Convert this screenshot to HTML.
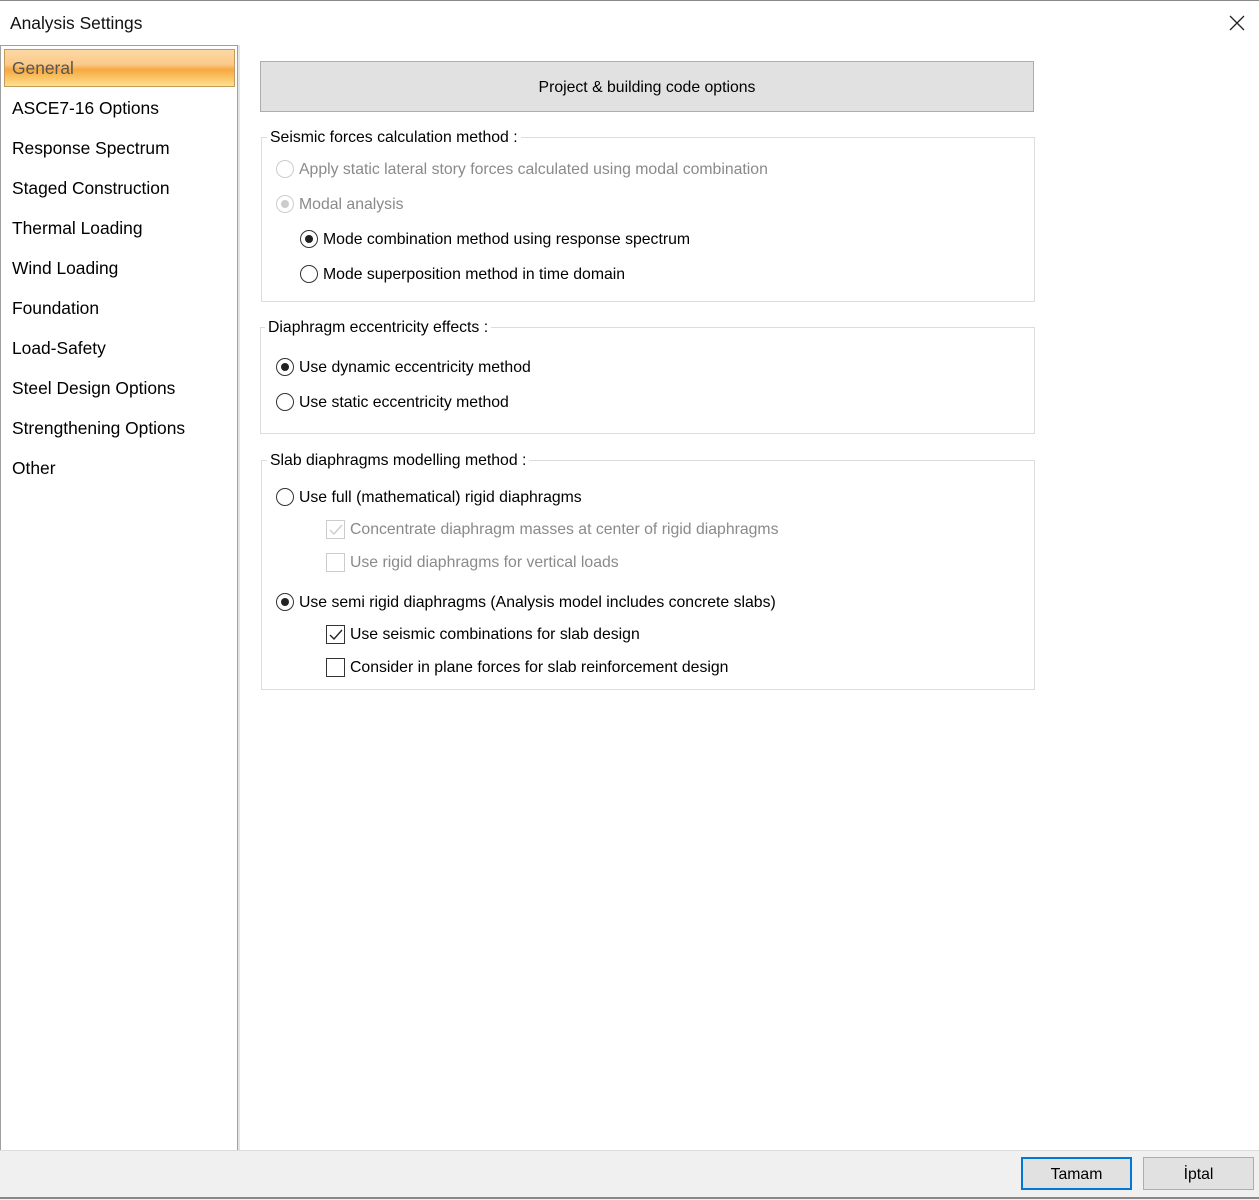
<!DOCTYPE html><html><head><style>
body{margin:0;width:1259px;height:1199px;background:#fff;position:relative;overflow:hidden;font-family:"Liberation Sans",sans-serif;font-size:15.8px;color:#000}
.a{position:absolute;white-space:nowrap}
.t{margin-top:1px}
.nav{font-size:17.4px;left:12px}
.box{position:absolute;border:1px solid #dcdcdc}
.lg{position:absolute;background:#fff;padding:0 3px;font-size:15.8px;white-space:nowrap;margin-top:1px}
.r{position:absolute;width:18px;height:18px;border:1px solid #333;border-radius:50%;box-sizing:border-box;background:#fff}
.r.on::after{content:"";position:absolute;left:4px;top:4px;width:8px;height:8px;border-radius:50%;background:#222}
.r.dis{border-color:#ccc}.r.dis.on::after{background:#ccc}
.c{position:absolute;width:19px;height:19px;border:1px solid #333;box-sizing:border-box;background:#fff}
.c.dis{border-color:#ccc}
.g{color:#8a8a8a}
</style></head><body>
<div class="a" style="left:0;top:0;width:1259px;height:1px;background:#888"></div>
<div class="a" style="left:10px;top:13px;font-size:17.4px;color:#111">Analysis Settings</div>
<svg class="a" style="left:1229px;top:15px" width="16" height="16"><path d="M1 1L15 15M15 1L1 15" stroke="#222" stroke-width="1.3"/></svg>
<div class="a" style="left:0;top:45px;width:236px;height:1104px;border:1px solid #a0a0a0"></div>
<div class="a" style="left:238px;top:45px;width:2px;height:1105px;background:#e4e4e4"></div>
<div class="a" style="left:4px;top:49px;width:229px;height:36px;border:1px solid #c49a5e;background:linear-gradient(#fcd9a4 0%,#fbc98a 40%,#f6a93f 55%,#fde08e 100%)"></div>
<div class="a nav" style="top:58px;color:#555">General</div>
<div class="a nav" style="top:98px">ASCE7-16 Options</div>
<div class="a nav" style="top:138px">Response Spectrum</div>
<div class="a nav" style="top:178px">Staged Construction</div>
<div class="a nav" style="top:218px">Thermal Loading</div>
<div class="a nav" style="top:258px">Wind Loading</div>
<div class="a nav" style="top:298px">Foundation</div>
<div class="a nav" style="top:338px">Load-Safety</div>
<div class="a nav" style="top:378px">Steel Design Options</div>
<div class="a nav" style="top:418px">Strengthening Options</div>
<div class="a nav" style="top:458px">Other</div>

<div class="a" style="left:260px;top:61px;width:772px;height:49px;background:#e1e1e1;border:1px solid #adadad;text-align:center;line-height:51px">Project &amp; building code options</div>

<div class="box" style="left:261px;top:137px;width:772px;height:163px"></div>
<div class="lg" style="left:267px;top:128px">Seismic forces calculation method :</div>
<div class="r dis" style="left:276px;top:160px"></div><div class="a g t" style="left:299px;top:160px">Apply static lateral story forces calculated using modal combination</div>
<div class="r dis on" style="left:276px;top:195px"></div><div class="a g t" style="left:299px;top:195px">Modal analysis</div>
<div class="r on" style="left:300px;top:230px"></div><div class="a t" style="left:323px;top:230px">Mode combination method using response spectrum</div>
<div class="r" style="left:300px;top:265px"></div><div class="a t" style="left:323px;top:265px">Mode superposition method in time domain</div>

<div class="box" style="left:260px;top:327px;width:773px;height:105px"></div>
<div class="lg" style="left:265px;top:318px">Diaphragm eccentricity effects :</div>
<div class="r on" style="left:276px;top:358px"></div><div class="a t" style="left:299px;top:358px">Use dynamic eccentricity method</div>
<div class="r" style="left:276px;top:393px"></div><div class="a t" style="left:299px;top:393px">Use static eccentricity method</div>

<div class="box" style="left:261px;top:460px;width:772px;height:228px"></div>
<div class="lg" style="left:267px;top:451px">Slab diaphragms modelling method :</div>
<div class="r" style="left:276px;top:488px"></div><div class="a t" style="left:299px;top:488px">Use full (mathematical) rigid diaphragms</div>
<div class="c dis" style="left:326px;top:520px"><svg width="17" height="17" style="position:absolute;left:0;top:0"><path d="M3 9L7 13L15 4" stroke="#ccc" stroke-width="1.4" fill="none"/></svg></div><div class="a g t" style="left:350px;top:520px">Concentrate diaphragm masses at center of rigid diaphragms</div>
<div class="c dis" style="left:326px;top:553px"></div><div class="a g t" style="left:350px;top:553px">Use rigid diaphragms for vertical loads</div>
<div class="r on" style="left:276px;top:593px"></div><div class="a t" style="left:299px;top:593px">Use semi rigid diaphragms (Analysis model includes concrete slabs)</div>
<div class="c" style="left:326px;top:625px"><svg width="17" height="17" style="position:absolute;left:0;top:0"><path d="M3 9L7 13L15 4" stroke="#222" stroke-width="1.4" fill="none"/></svg></div><div class="a t" style="left:350px;top:625px">Use seismic combinations for slab design</div>
<div class="c" style="left:326px;top:658px"></div><div class="a t" style="left:350px;top:658px">Consider in plane forces for slab reinforcement design</div>

<div class="a" style="left:0;top:1150px;width:1259px;height:49px;background:#f0f0f0;border-top:1px solid #dcdcdc"></div>
<div class="a" style="left:0;top:1197px;width:1259px;height:2px;background:#888"></div>
<div class="a" style="left:1021px;top:1157px;width:107px;height:29px;border:2px solid #0078d7;background:#e1e1e1;text-align:center;line-height:31px">Tamam</div>
<div class="a" style="left:1143px;top:1157px;width:109px;height:31px;border:1px solid #adadad;background:#e1e1e1;text-align:center;line-height:33px">İptal</div>
</body></html>
